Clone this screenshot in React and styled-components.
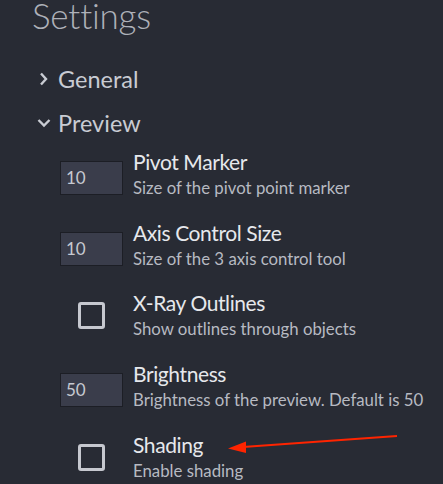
import React from "react";
import styled, { createGlobalStyle } from "styled-components";

const Global = createGlobalStyle`
  html, body { margin: 0; padding: 0; background: #282b34; }
  body { font-family: Lato, "Noto Sans", sans-serif; overflow: hidden; }
`;

const Page = styled.div`
  position: relative;
  width: 443px;
  height: 484px;
  background: #282b34;
  overflow: hidden;
`;

const Title = styled.h1`
  margin: 0 0 0 32px;
  font-size: 35px;
  line-height: 30px;
  font-weight: 300;
  color: #aeb1b9;
  letter-spacing: -0.2px;
`;

const SectionHeader = styled.div`
  display: flex;
  align-items: center;
  gap: 7px;
  margin: ${(p) => p.$mt}px 0 0 37px;
  height: 30px;
  font-size: 23.5px;
  color: #c9ccd3;
`;

const ChevronBox = styled.svg`
  width: 14px;
  height: 14px;
  flex: none;
`;

const Items = styled.div`
  display: flex;
  flex-direction: column;
  gap: 18.6px;
  margin: 12.7px 0 0 60px;
`;

const Row = styled.div`
  display: grid;
  grid-template-columns: 63px 1fr;
  column-gap: 10px;
  align-items: center;
`;

const ControlCell = styled.div`
  display: flex;
  justify-content: center;
  align-items: center;
  height: 52px;
`;

const NumberInput = styled.div`
  box-sizing: border-box;
  width: 63px;
  height: 34px;
  margin-top: 4px;
  background: #3a3d4b;
  border: 1px solid #1c1e25;
  color: #c6c9d1;
  font-size: 17px;
  line-height: 32px;
  padding-left: 5px;
`;

const CheckBox = styled.div`
  box-sizing: border-box;
  width: 27px;
  height: 27px;
  margin-bottom: 3px;
  border: 3px solid #c6c8cf;
  border-radius: 3px;
`;

const TextBlock = styled.div`
  display: flex;
  flex-direction: column;
`;

const Label = styled.div`
  font-size: 21px;
  line-height: 24px;
  letter-spacing: -0.4px;
  color: #e6e8ec;
  white-space: nowrap;
`;

const Desc = styled.div`
  font-size: 16.8px;
  line-height: 28px;
  color: #b7bac2;
  white-space: nowrap;
`;

const Arrow = styled.svg`
  position: absolute;
  left: 0;
  top: 0;
  width: 443px;
  height: 484px;
  pointer-events: none;
`;

const items = [
  { type: "num", value: "10", label: "Pivot Marker", desc: "Size of the pivot point marker" },
  { type: "num", value: "10", label: "Axis Control Size", desc: "Size of the 3 axis control tool" },
  { type: "check", label: "X-Ray Outlines", desc: "Show outlines through objects" },
  { type: "num", value: "50", label: "Brightness", desc: "Brightness of the preview. Default is 50" },
  { type: "check", label: "Shading", desc: "Enable shading" },
];

function Chevron({ open }) {
  return (
    <ChevronBox viewBox="0 0 14 14">
      {open ? (
        <polyline points="1.5,4 7,9.5 12.5,4" fill="none" stroke="#c9ccd3" strokeWidth="2.4" />
      ) : (
        <polyline points="4,1.5 9,7 4,12.5" fill="none" stroke="#c9ccd3" strokeWidth="2.4" />
      )}
    </ChevronBox>
  );
}

export default function App() {
  return (
    <Page>
      <Global />
      <Title>Settings</Title>
      <SectionHeader $mt={33.5}>
        <Chevron />
        <span>General</span>
      </SectionHeader>
      <SectionHeader $mt={14}>
        <Chevron open />
        <span>Preview</span>
      </SectionHeader>
      <Items>
        {items.map((it) => (
          <Row key={it.label}>
            <ControlCell>
              {it.type === "num" ? <NumberInput>{it.value}</NumberInput> : <CheckBox />}
            </ControlCell>
            <TextBlock>
              <Label>{it.label}</Label>
              <Desc>{it.desc}</Desc>
            </TextBlock>
          </Row>
        ))}
      </Items>
      <Arrow viewBox="0 0 443 484">
        <line x1="397" y1="436" x2="243" y2="447" stroke="#ff2400" strokeWidth="2" />
        <polygon points="228,448.5 246,441.5 246,453" fill="#ff2400" />
      </Arrow>
    </Page>
  );
}
